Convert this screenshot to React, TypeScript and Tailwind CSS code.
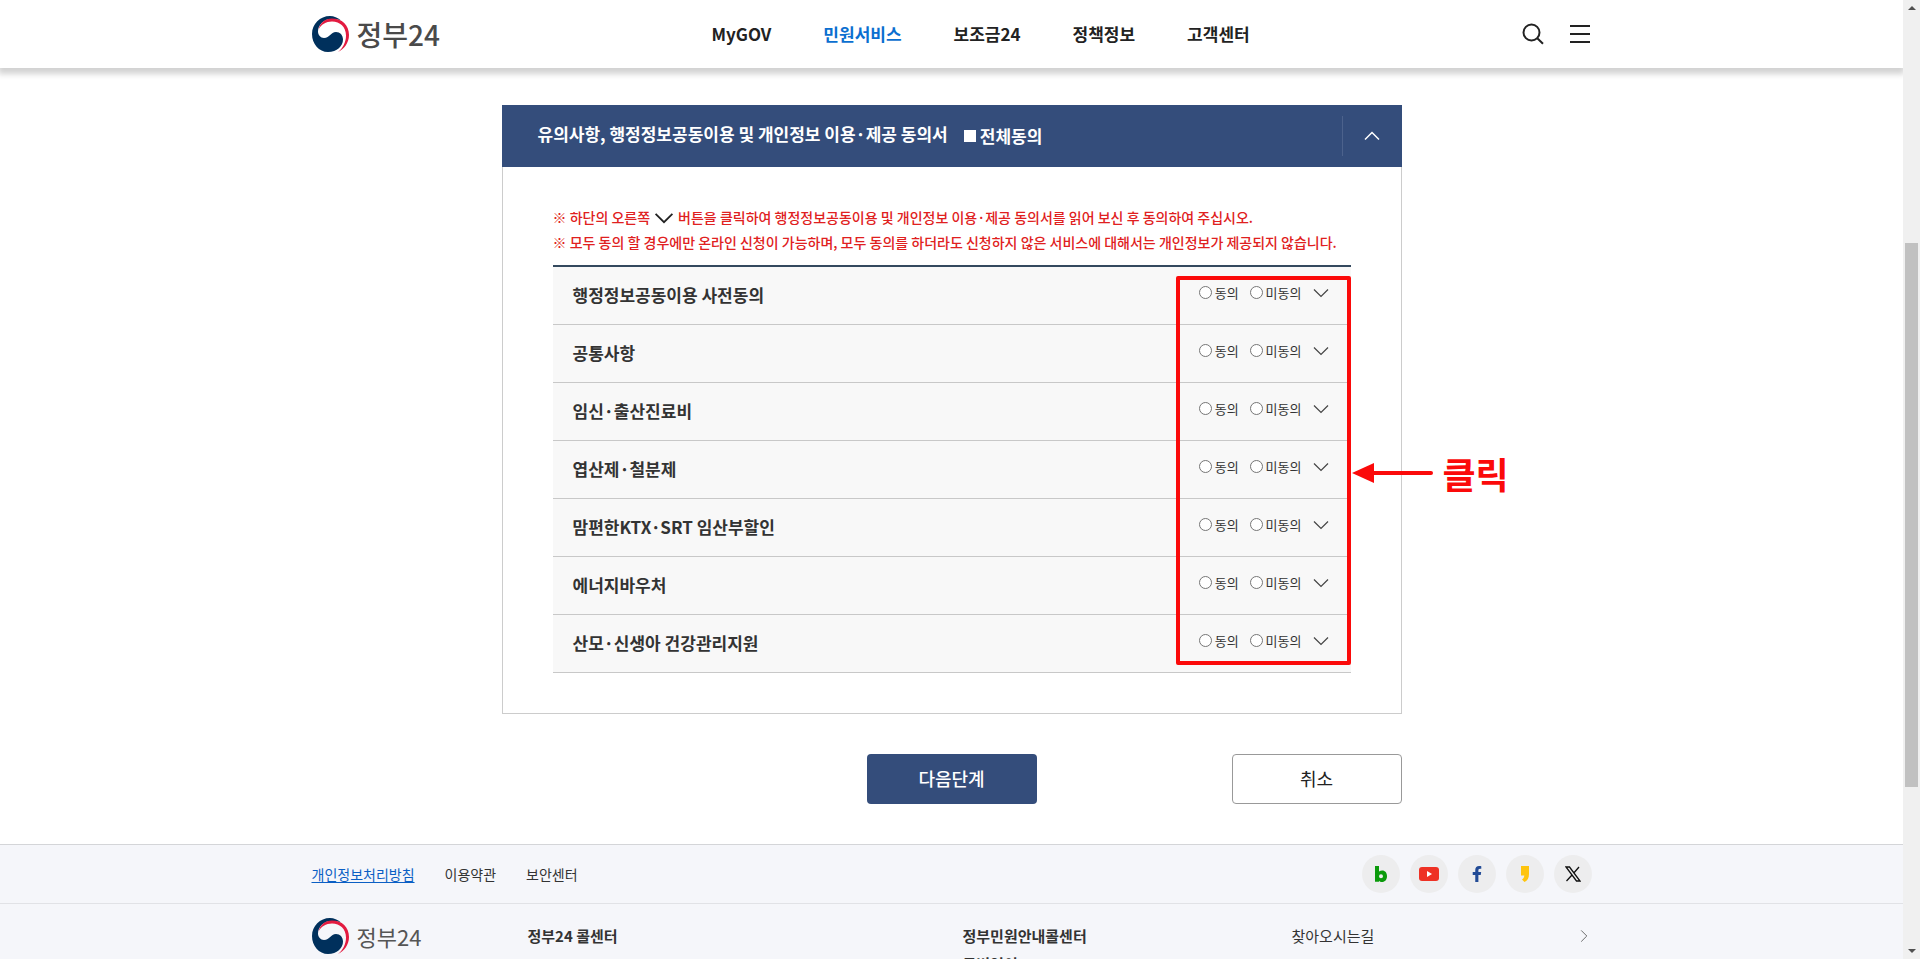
import type { ReactNode } from 'react';
import { FaFacebookF } from 'react-icons/fa';

const NAV_ITEMS = [
  { label: 'MyGOV', active: false },
  { label: '민원서비스', active: true },
  { label: '보조금24', active: false },
  { label: '정책정보', active: false },
  { label: '고객센터', active: false },
];

const CONSENT_ITEMS = [
  '행정정보공동이용 사전동의',
  '공통사항',
  '임신·출산진료비',
  '엽산제·철분제',
  '맘편한KTX·SRT 임산부할인',
  '에너지바우처',
  '산모·신생아 건강관리지원',
];

function Emblem() {
  return (
    <svg viewBox="0 0 37 36" className="h-9 w-[37px] shrink-0" aria-hidden="true">
      <path
        fill="#00305c"
        d="M29 4.5C25.5 1.500 22 0 18 0 8 0 0 8 0 18s7 18 16 18c9 0 15-6 15-12.500C31 19 28 16 24 16c-5.500 0-6 6-12 6-3.500 0-6-3-6-6.500C6 9 12 3 19 3c3.500 0 7 .3 10 1.500z"
      />
      <path
        fill="#e31b40"
        d="M6.500 13.500C8 7 13 2.500 20 2.500c10 0 17 6.500 17 16.500 0 8-5 14-11 17 5-4 8-10 8-16.500 0-8.500-6-14-14-14-6 0-11 3-13.500 8z"
      />
    </svg>
  );
}

function Chevron({ className, width = 1.2 }: { className: string; width?: number }) {
  return (
    <svg viewBox="0 0 20 20" fill="none" stroke="currentColor" className={className} aria-hidden="true">
      <path d="M3 6.500l7 7 7-7" strokeWidth={width} />
    </svg>
  );
}

function Header() {
  return (
    <header className="relative z-10 bg-white shadow-[0_4px_6px_2px_rgba(0,0,0,0.18)]">
      <div className="mx-auto flex h-[68px] max-w-[1280px] items-center">
        <a href="#" className="flex w-[400px] items-center gap-2 text-[28px] leading-9 font-medium text-[#4a4a4a]">
          <Emblem />
          정부24
        </a>
        <nav className="flex flex-1 gap-13 text-[17px] font-bold text-[#222]">
          {NAV_ITEMS.map((item) => (
            <a key={item.label} href="#" className={item.active ? 'text-[#0b6fd0]' : 'hover:text-[#0b6fd0]'}>
              {item.label}
            </a>
          ))}
        </nav>
        <div className="flex items-center gap-6 text-[#222]">
          <button type="button" aria-label="검색" className="cursor-pointer">
            <svg viewBox="0 0 24 24" fill="none" stroke="currentColor" strokeWidth="2" className="size-6">
              <circle cx="9.500" cy="10.500" r="8" />
              <path d="M15.300 16.300l5.700 5.500" />
            </svg>
          </button>
          <button type="button" aria-label="전체메뉴" className="cursor-pointer">
            <svg viewBox="0 0 22 20" fill="none" stroke="currentColor" strokeWidth="2" className="h-5 w-[22px]">
              <path d="M0 2h20M0 10h20M0 18h20" />
            </svg>
          </button>
        </div>
      </div>
    </header>
  );
}

function ConsentRow({ title, index }: { title: string; index: number }) {
  const name = `consent-${index}`;
  return (
    <li className="flex h-[58px] items-center border-b border-[#c8c8c8] bg-[#f8f8f8] px-5">
      <h3 className="flex-1 pb-0.5 text-[17px] font-bold text-[#333]">{title}</h3>
      <div className="flex items-center pb-1.5 text-[13px] leading-5 text-[#333]">
        <label className="mr-[11px] flex items-center gap-[3px]">
          <input type="radio" name={name} className="size-[13px] appearance-none rounded-full border border-[#767676] bg-white checked:border-4 checked:border-[#0075ff]" />
          동의
        </label>
        <label className="mr-[9px] flex items-center gap-[3px]">
          <input type="radio" name={name} className="size-[13px] appearance-none rounded-full border border-[#767676] bg-white checked:border-4 checked:border-[#0075ff]" />
          미동의
        </label>
        <button type="button" aria-label={`${title} 펼치기`} className="cursor-pointer text-[#444]">
          <Chevron className="size-5" />
        </button>
      </div>
    </li>
  );
}

function ClickGuide() {
  return (
    <>
      <div className="pointer-events-none absolute top-[11px] right-0 bottom-2 w-[175px] rounded-xs border-4 border-[#fb0a0a]" />
      <div className="pointer-events-none absolute top-[181px] left-full flex items-center gap-2.5">
        <svg viewBox="0 0 82 20" className="h-5 w-[82px]" aria-hidden="true">
          <path d="M20 10h60" stroke="#fb0a0a" strokeWidth="4" strokeLinecap="round" />
          <path d="M1 10L23 0v20z" fill="#fb0a0a" />
        </svg>
        <strong className="text-[36px] leading-[54px] font-bold whitespace-nowrap text-[#fb0a0a]">클릭</strong>
      </div>
    </>
  );
}

function ConsentPanel() {
  return (
    <section>
      <div className="flex h-[62px] items-center bg-[#344d7b] pl-9 text-[17px] font-bold text-white">
        <h2 className="pb-1">유의사항, 행정정보공동이용 및 개인정보 이용·제공 동의서</h2>
        <label className="ml-4 flex flex-1 items-center gap-1">
          <input type="checkbox" className="size-3 appearance-none bg-white checked:bg-[#0075ff]" />
          전체동의
        </label>
        <button
          type="button"
          aria-label="접기"
          className="flex h-10 w-[60px] cursor-pointer items-center justify-center border-l border-[#4c628c]"
        >
          <Chevron className="size-5 rotate-180" width={1.5} />
        </button>
      </div>
      <div className="border border-t-0 border-[#ccc] px-[50px] pt-[38px] pb-10">
        <div className="mb-2.5 text-sm leading-[25px] font-medium text-[#e02020]">
          <p className="flex items-center">
            ※ 하단의 오른쪽
            <Chevron className="mx-0.5 size-6 text-[#222]" width={1.5} />
            버튼을 클릭하여 행정정보공동이용 및 개인정보 이용·제공 동의서를 읽어 보신 후 동의하여 주십시오.
          </p>
          <p>※ 모두 동의 할 경우에만 온라인 신청이 가능하며, 모두 동의를 하더라도 신청하지 않은 서비스에 대해서는 개인정보가 제공되지 않습니다.</p>
        </div>
        <div className="relative">
          <ul className="border-t-2 border-[#34495e]">
            {CONSENT_ITEMS.map((title, i) => (
              <ConsentRow key={title} title={title} index={i} />
            ))}
          </ul>
          <ClickGuide />
        </div>
      </div>
    </section>
  );
}

function SocialLink({ label, children }: { label: string; children: ReactNode }) {
  return (
    <a href="#" aria-label={label} className="flex size-[38px] items-center justify-center rounded-full bg-[#ededee]">
      {children}
    </a>
  );
}

function Footer() {
  return (
    <footer className="border-t border-[#d4d5d8] bg-[#f5f6fa] text-[#333]">
      <div className="border-b border-[#e1e2e6]">
        <div className="mx-auto flex h-[58px] max-w-[1280px] items-center justify-between">
          <div className="flex gap-[30px] text-sm">
            <a href="#" className="text-[#0b5fc4] underline underline-offset-2">개인정보처리방침</a>
            <a href="#">이용약관</a>
            <a href="#">보안센터</a>
          </div>
          <div className="flex gap-2.5">
            <SocialLink label="블로그">
              <svg viewBox="0 0 14 16" className="h-4 w-3.5">
                <path
                  fill="#0b9a0b"
                  fillRule="evenodd"
                  d="M1 0h4v5.500C6 4.800 7 4.500 8.200 4.500c3 0 4.800 2.400 4.800 5.700C13 13.600 11 16 8 16c-1.300 0-2.400-.4-3-1.300V15.700H1zM7 8.200a2 2 0 100 4 2 2 0 000-4z"
                />
              </svg>
            </SocialLink>
            <SocialLink label="유튜브">
              <svg viewBox="0 0 20 14" className="h-3.5 w-5">
                <rect width="20" height="14" rx="3" fill="#ee3124" />
                <path d="M8 4l5 3-5 3z" fill="#fff" />
              </svg>
            </SocialLink>
            <SocialLink label="페이스북">
              <FaFacebookF className="size-4 text-[#224b96]" />
            </SocialLink>
            <SocialLink label="카카오스토리">
              <svg viewBox="0 0 10 16" className="h-4 w-2.5">
                <path fill="#fec40d" d="M1 0h8v8c0 4-1.500 6.500-4.500 8L2 13.500c1.500-1 2.200-2.200 2.300-4H1z" />
              </svg>
            </SocialLink>
            <SocialLink label="X">
              <svg viewBox="0 0 16 16" fill="none" stroke="#111" className="size-4">
                <path d="M1 1h3.500L15 15h-3.500zM14 1L8.800 7M7 9l-5.500 6" strokeWidth="1.300" />
              </svg>
            </SocialLink>
          </div>
        </div>
      </div>
      <div className="mx-auto grid max-w-[1280px] grid-cols-[216px_435fr_329fr_300px] pt-3.5 pb-10 text-[15px] leading-9">
        <a href="#" className="flex items-center gap-2 self-start text-[22px] text-[#555]">
          <Emblem />
          정부24
        </a>
        <strong className="font-bold">정부24 콜센터</strong>
        <div className="font-bold">
          <p className="py-1.5 leading-6">정부민원안내콜센터</p>
          <p className="leading-5">국번없이 110</p>
        </div>
        <a href="#" className="flex items-center justify-between self-start">
          찾아오시는길
          <Chevron className="size-4 -rotate-90 text-[#666]" />
        </a>
      </div>
    </footer>
  );
}

function ScrollTrack() {
  return (
    <div className="flex w-[17px] shrink-0 flex-col items-center bg-[#f0f0f0] py-1.5" aria-hidden="true">
      <svg viewBox="0 0 8 4" className="h-1 w-2">
        <path d="M0 4l4-4 4 4z" fill="#505050" />
      </svg>
      <div className="flex w-full flex-1 flex-col px-0.5">
        <div className="grow-[233]" />
        <div className="grow-[544] bg-[#c1c1c1]" />
        <div className="grow-[162]" />
      </div>
      <svg viewBox="0 0 8 4" className="h-1 w-2">
        <path d="M0 0l4 4 4-4z" fill="#505050" />
      </svg>
    </div>
  );
}

export default function App() {
  return (
    <div className="flex h-screen overflow-hidden bg-white font-['Noto_Sans_CJK_KR',sans-serif]">
      <div className="min-w-0 flex-1 overflow-hidden">
        <Header />
        <main className="mx-auto max-w-[900px] pt-[37px] pb-10">
          <ConsentPanel />
          <div className="mt-10 grid grid-cols-[1fr_170px_1fr] text-lg">
            <button
              type="button"
              className="col-start-2 h-[50px] cursor-pointer rounded bg-[#344d7b] pb-0.5 font-medium text-white"
            >
              다음단계
            </button>
            <button
              type="button"
              className="h-[50px] w-[170px] cursor-pointer justify-self-end rounded border border-[#999] bg-white pb-0.5 text-[#222]"
            >
              취소
            </button>
          </div>
        </main>
        <Footer />
      </div>
      <ScrollTrack />
    </div>
  );
}
